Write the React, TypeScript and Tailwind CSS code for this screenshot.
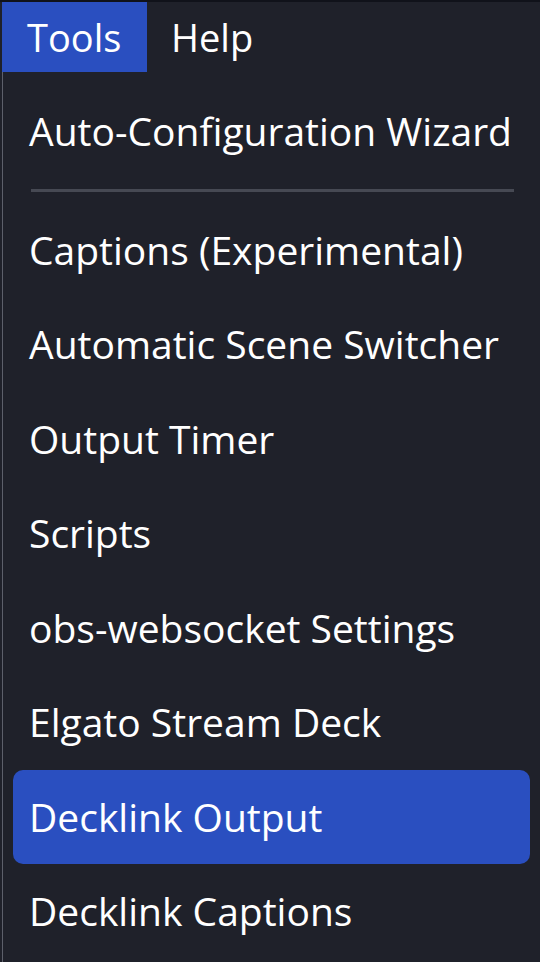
const items = [
  "Captions (Experimental)",
  "Automatic Scene Switcher",
  "Output Timer",
  "Scripts",
  "obs-websocket Settings",
  "Elgato Stream Deck",
  "Decklink Output",
  "Decklink Captions",
];

export default function App() {
  return (
    <div
      className="w-[540px] h-[962px] overflow-hidden bg-[#1f212a] text-white flex flex-col"
      style={{ fontFamily: '"Open Sans", "Noto Sans", sans-serif' }}
    >
      <div className="h-[2px] bg-[#10121a]" />
      {/* menu bar */}
      <div className="flex h-[70px] text-[38px] leading-none">
        <div className="ml-[2px] w-[145px] bg-[#2a4fc0] flex items-center pl-[25px]">Tools</div>
        <div className="flex items-center pl-[24px]">Help</div>
      </div>
      {/* dropdown */}
      <div className="flex-1 flex flex-col border-l border-[#5d606b] ml-[2px] pt-[12px]">
        <div className="h-[94.5px] flex items-center pl-[26px] text-[39px]">Auto-Configuration Wizard</div>
        <div className="h-[24px] flex items-center pl-[28px] pr-[26px]">
          <div className="h-[3px] w-full bg-[#464953]" />
        </div>
        {items.map((label) => (
          <div key={label} className="h-[94.5px] px-[10px] flex">
            <div
              className={
                "flex-1 flex items-center pl-[16px] text-[39px] rounded-[10px] " +
                (label === "Decklink Output" ? "bg-[#2a4fc0]" : "")
              }
            >
              {label}
            </div>
          </div>
        ))}
      </div>
    </div>
  );
}
